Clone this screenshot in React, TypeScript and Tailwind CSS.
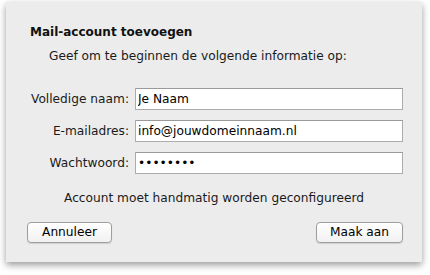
import { useState } from 'react';

const FONT = "font-['DejaVu_Sans',sans-serif]";

function Field({ label, value, type = 'text' }: { label: string; value: string; type?: string }) {
  const [val, setVal] = useState(value);
  return (
    <>
      <label className="text-right text-[12.2px] leading-[22px] text-[#1a1a1a]">{label}</label>
      <input
        type={type}
        value={val}
        onChange={(e) => setVal(e.target.value)}
        className="h-[22px] w-[268px] border border-[#acacac] border-t-[#9a9a9a] bg-white px-[2px] text-[12.2px] text-black outline-none"
      />
    </>
  );
}

function MacButton({ children }: { children: React.ReactNode }) {
  return (
    <button className="h-[21px] rounded-[4px] border border-[#9e9e9e] bg-gradient-to-b from-white to-[#f1f1f1] text-[12.2px] leading-[19px] text-black shadow-[0_1px_1px_rgba(0,0,0,0.12)]">
      {children}
    </button>
  );
}

export default function App() {
  return (
    <div className={`h-[275px] w-[430px] bg-white pl-[6px] pt-[2px] ${FONT}`}>
      <div className="flex h-[260px] w-[416px] flex-col bg-[#ececec] shadow-[0_3px_7px_rgba(0,0,0,0.4)]">
        <h1 className="pl-[24px] pt-[22px] text-[12px] font-bold leading-[16px] text-[#111]">
          Mail-account toevoegen
        </h1>
        <p className="mt-[8px] pl-[43px] text-[12.2px] leading-[16px] text-[#1a1a1a]">
          Geef om te beginnen de volgende informatie op:
        </p>

        <div className="mt-[24px] grid grid-cols-[123px_268px] gap-x-[6px] gap-y-[10px]">
          <Field label="Volledige naam:" value="Je Naam" />
          <Field label="E-mailadres:" value="info@jouwdomeinnaam.nl" />
          <Field label="Wachtwoord:" value="password" type="password" />
        </div>

        <p className="mt-[16px] text-center text-[12.2px] leading-[16px] text-[#1a1a1a]">
          Account moet handmatig worden geconfigureerd
        </p>

        <div className="mt-[16px] flex justify-between pl-[21px] pr-[19px]">
          <div className="w-[85px] flex flex-col"><MacButton>Annuleer</MacButton></div>
          <div className="w-[87px] flex flex-col"><MacButton>Maak aan</MacButton></div>
        </div>
      </div>
    </div>
  );
}
